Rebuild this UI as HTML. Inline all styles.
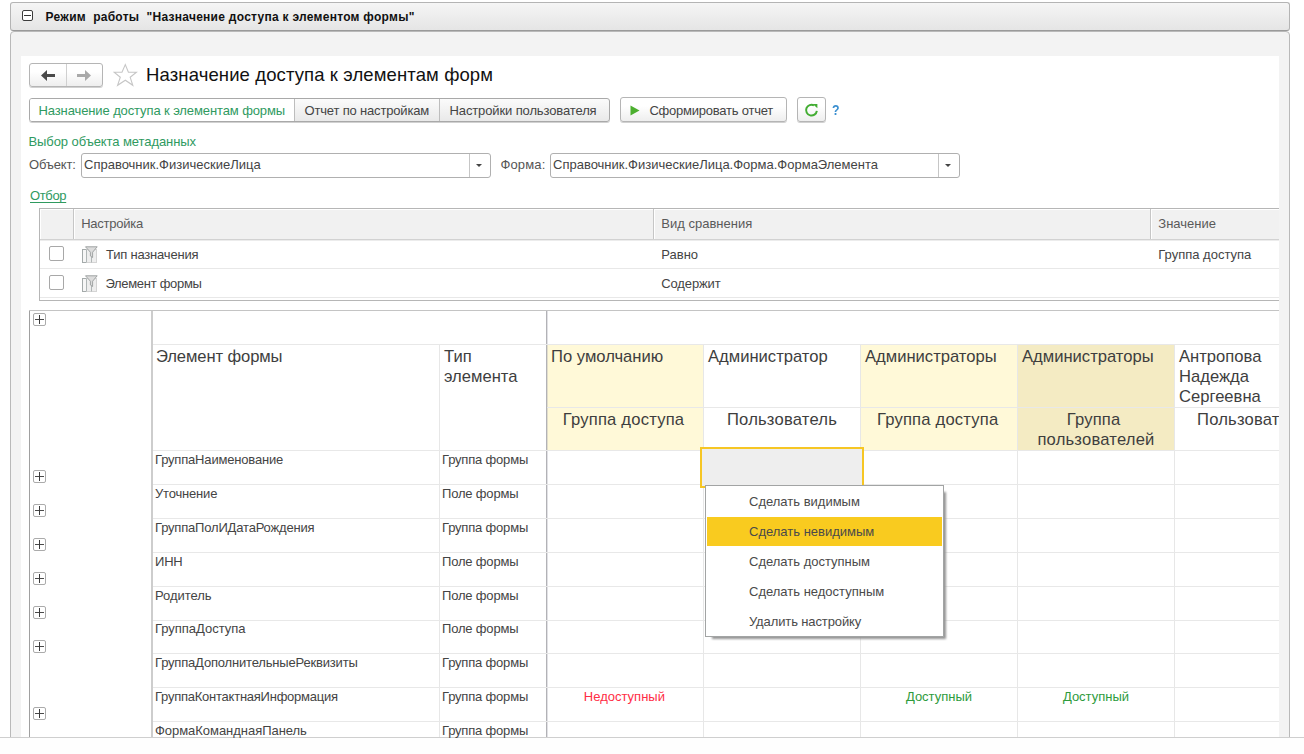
<!DOCTYPE html>
<html lang="ru">
<head>
<meta charset="utf-8">
<title>Назначение доступа к элементам форм</title>
<style>
*{box-sizing:border-box;margin:0;padding:0}
html,body{width:1304px;height:754px;overflow:hidden;background:#fff}
body{font-family:"Liberation Sans",sans-serif;font-size:12px;color:#333;position:relative}
.abs{position:absolute}
.t{position:absolute;white-space:pre;line-height:1}
/* outer frame */
#titlebar{left:10px;top:2px;width:1280px;height:29px;border:1px solid #b4b4b4;border-bottom-color:#9a9a9a;border-radius:3px;background:linear-gradient(#f5f5f5,#e5e5e5)}
#panel{left:10px;top:31px;width:1280px;height:720px;border:1px solid #b9b9b9;border-radius:4px 4px 0 0;background:#f3f3f3}
#white{left:21px;top:56px;width:1258px;height:690px;background:#fff}
#bottomline{left:0;top:737px;width:1304px;height:1px;background:#cfcfcf}
#bottomfill{left:0;top:738px;width:1304px;height:16px;background:#fefefe}
/* buttons */
.btn{position:absolute;border:1px solid #b5b5b5;border-radius:3px;background:linear-gradient(#ffffff 35%,#eeeeee);box-shadow:0 1px 0 rgba(0,0,0,.18)}
.inp{position:absolute;border:1px solid #b0b0b0;border-radius:3px;background:#fff}
.green{color:#2f9a5f}
.vline{position:absolute;width:1px;background:#e7e7e7}
.hline{position:absolute;height:1px;background:#e8e8e8}
.plus{position:absolute;width:13px;height:13px;border:1px solid #ababab;border-radius:2px;background:#fff}
.plus:before{content:"";position:absolute;left:1px;top:5px;width:9px;height:1px;background:#4a4a4a}
.plus:after{content:"";position:absolute;left:5px;top:1px;width:1px;height:9px;background:#3a3a3a}
.chk{position:absolute;width:15px;height:15px;border:1px solid #a8a8a8;border-radius:2px;background:#fff}
.r{font-size:13px;color:#444;letter-spacing:-.18px}
.h16{font-size:16.6px;color:#3e3e3e;line-height:20px}
.c{text-align:center}
</style>
</head>
<body>
<div id="titlebar" class="abs"></div>
<div id="panel" class="abs"></div>
<div id="white" class="abs"></div>
<div id="bottomfill" class="abs"></div>
<div id="bottomline" class="abs"></div>

<!-- title bar content -->
<div class="abs" style="left:22px;top:10px;width:11px;height:11px;border:1px solid #3c3c3c;border-radius:2px;background:#fff"></div>
<div class="abs" style="left:24px;top:15px;width:7px;height:1px;background:#333"></div>
<div class="t" id="tbtext" style="left:45.6px;top:11px;font-size:12px;font-weight:bold;color:#111;letter-spacing:.27px">Режим  работы  "Назначение доступа к элементом формы"</div>

<!-- nav buttons -->
<div class="btn" style="left:29px;top:63px;width:74px;height:24px"></div>
<div class="abs" style="left:66px;top:64px;width:1px;height:22px;background:#d0d0d0"></div>
<svg class="abs" style="left:40px;top:69px" width="16" height="13" viewBox="0 0 16 13"><path d="M1 6.5 L7 1 V5 H15 V8 H7 V12 Z" fill="#4a4a4a"/></svg>
<svg class="abs" style="left:76px;top:69px" width="16" height="13" viewBox="0 0 16 13"><path d="M15 6.5 L9 1 V5 H1 V8 H9 V12 Z" fill="#a9a9a9"/></svg>
<!-- star -->
<svg class="abs" style="left:113px;top:63px" width="26" height="25" viewBox="0 0 26 25"><path d="M12.3 1.6 L15.4 9.3 L23.4 9.3 L17.2 14.3 L19.8 22.3 L12.3 17.2 L4.6 22.3 L7.3 14.3 L1.1 9.3 L9.0 9.3 Z" fill="#fff" stroke="#c6c6c6" stroke-width="1.1" stroke-linejoin="miter"/></svg>
<div class="t" id="heading" style="left:146.1px;top:66px;font-size:18.5px;color:#111;letter-spacing:.11px">Назначение доступа к элементам форм</div>

<!-- tabs -->
<div class="btn" style="left:29px;top:98px;width:581px;height:24px;border-color:#a9a9a9;background:linear-gradient(#fbfbfb,#e9e9e9)"></div>
<div class="abs" style="left:30px;top:99px;width:264px;height:22px;background:#fff;border-radius:2px 0 0 2px"></div>
<div class="abs" style="left:294px;top:99px;width:1px;height:22px;background:#bdbdbd"></div>
<div class="abs" style="left:439px;top:99px;width:1px;height:22px;background:#bdbdbd"></div>
<div class="t green" id="tab1" style="top:104px;left:38.5px;font-size:13px;letter-spacing:-.11px">Назначение доступа к элементам формы</div>
<div class="t" id="tab2" style="top:104px;left:304.5px;font-size:13px;letter-spacing:-.17px;color:#444">Отчет по настройкам</div>
<div class="t" id="tab3" style="top:104px;left:449.5px;font-size:13px;letter-spacing:-.12px;color:#444">Настройки пользователя</div>

<!-- generate report -->
<div class="btn" style="left:620px;top:97px;width:167px;height:25px"></div>
<svg class="abs" style="left:630px;top:105px" width="10" height="11" viewBox="0 0 10 11"><path d="M0.5 0.5 L9.5 5.5 L0.5 10.5 Z" fill="#4caf2f"/></svg>
<div class="t" id="gen" style="top:104px;left:649.4px;font-size:13px;letter-spacing:-.22px;color:#444">Сформировать отчет</div>
<!-- refresh -->
<div class="btn" style="left:797px;top:97px;width:29px;height:25px"></div>
<svg class="abs" style="left:803px;top:102px" width="17" height="17" viewBox="0 0 17 17"><path d="M13.85 8.9 A5.4 5.4 0 1 1 11.0 3.35" fill="none" stroke="#43ad33" stroke-width="2"/><path d="M9.6 1.9 H14.4 V6.2 Z" fill="#43ad33"/></svg>
<div class="t" style="left:832.3px;top:103px;font-size:14px;font-weight:bold;color:#3a8fd0;transform:scaleX(.88);transform-origin:0 0">?</div>

<!-- metadata chooser -->
<div class="t green" id="vybor" style="left:28.5px;top:135px;font-size:13px;letter-spacing:-.08px">Выбор объекта метаданных</div>
<div class="t" id="lobj" style="left:29px;top:158px;font-size:13px;letter-spacing:-.17px;color:#555">Объект:</div>
<div class="inp" style="left:81px;top:153px;width:410px;height:25px"></div>
<div class="abs" style="left:469px;top:154px;width:1px;height:23px;background:#c6c6c6"></div>
<div class="abs" style="left:476px;top:164px;width:0;height:0;border-left:3px solid transparent;border-right:3px solid transparent;border-top:3px solid #444"></div>
<div class="t" id="vobj" style="left:84px;top:158px;font-size:13px;color:#444">Справочник.ФизическиеЛица</div>
<div class="t" id="lform" style="left:500.5px;top:158px;font-size:13px;letter-spacing:.13px;color:#555">Форма:</div>
<div class="inp" style="left:550px;top:153px;width:410px;height:25px"></div>
<div class="abs" style="left:938px;top:154px;width:1px;height:23px;background:#c6c6c6"></div>
<div class="abs" style="left:945px;top:164px;width:0;height:0;border-left:3px solid transparent;border-right:3px solid transparent;border-top:3px solid #444"></div>
<div class="t" id="vform" style="left:553px;top:158px;font-size:13px;color:#444">Справочник.ФизическиеЛица.Форма.ФормаЭлемента</div>

<div class="t green" id="otbor" style="left:30px;top:189px;font-size:13px;letter-spacing:-.35px;text-decoration:underline;text-decoration-skip-ink:none;text-underline-offset:1.5px;text-decoration-thickness:1.3px">Отбор</div>
<!-- filter table -->
<div class="abs" style="left:39px;top:208px;width:1240px;height:93px;border:1px solid #b6b6b6;border-right:0;background:#fff"></div>
<div class="abs" style="left:41px;top:210px;width:1238px;height:29px;background:#f1f1f1"></div>
<div class="abs" style="left:40px;top:239px;width:1239px;height:1px;background:#d2d2d2"></div>
<div class="abs" style="left:40px;top:240px;width:1239px;height:1px;background:#ececec"></div>
<div class="abs" style="left:40px;top:268px;width:1239px;height:1px;background:#e8e8e8"></div>
<div class="abs" style="left:40px;top:297px;width:1239px;height:1px;background:#e8e8e8"></div>
<div class="abs" style="left:73px;top:209px;width:2px;height:30px;background:linear-gradient(90deg,#c6c6c6 50%,#fff 50%)"></div>
<div class="abs" style="left:653px;top:209px;width:2px;height:30px;background:linear-gradient(90deg,#c6c6c6 50%,#fff 50%)"></div>
<div class="abs" style="left:1150px;top:209px;width:2px;height:30px;background:linear-gradient(90deg,#c6c6c6 50%,#fff 50%)"></div>
<div class="t" id="fh1" style="left:81.2px;top:217px;font-size:13px;color:#5a5a5a;letter-spacing:-.25px">Настройка</div>
<div class="t" id="fh2" style="left:661.3px;top:217px;font-size:13px;color:#5a5a5a">Вид сравнения</div>
<div class="t" id="fh3" style="left:1158.3px;top:217px;font-size:13px;color:#5a5a5a">Значение</div>
<div class="chk" style="left:49px;top:246px"></div>
<div class="chk" style="left:49px;top:275px"></div>
<svg class="abs ficon" style="left:81px;top:246px" width="17" height="17" viewBox="0 0 17 17"><rect x="1.5" y="3.5" width="4" height="13" fill="#f6f6f6" stroke="#a4aaaa"/><rect x="5.5" y="3.5" width="10" height="13" fill="#eeeeee" stroke="#d4d4d4"/><path d="M5.5 3.5V16.5M10.5 9V16.5" stroke="#b0b6b6" fill="none"/><path d="M4.5 0.8 H16.2 L11.6 6.2 V11.5 L9.4 10 V6.2 Z" fill="#dcdcdc" stroke="#a0a4a4" stroke-width="1"/></svg>
<svg class="abs ficon" style="left:81px;top:275px" width="17" height="17" viewBox="0 0 17 17"><rect x="1.5" y="3.5" width="4" height="13" fill="#f6f6f6" stroke="#a4aaaa"/><rect x="5.5" y="3.5" width="10" height="13" fill="#eeeeee" stroke="#d4d4d4"/><path d="M5.5 3.5V16.5M10.5 9V16.5" stroke="#b0b6b6" fill="none"/><path d="M4.5 0.8 H16.2 L11.6 6.2 V11.5 L9.4 10 V6.2 Z" fill="#dcdcdc" stroke="#a0a4a4" stroke-width="1"/></svg>
<div class="t" id="fr1a" style="left:106px;top:248px;font-size:13px;color:#444;letter-spacing:-.2px">Тип назначения</div>
<div class="t" id="fr2a" style="left:105.4px;top:277px;font-size:13px;color:#444;letter-spacing:-.3px">Элемент формы</div>
<div class="t" id="fr1b" style="left:661.3px;top:248px;font-size:13px;color:#444">Равно</div>
<div class="t" id="fr2b" style="left:661.3px;top:277px;font-size:13px;color:#444;letter-spacing:-.14px">Содержит</div>
<div class="t" id="fr1c" style="left:1158.3px;top:248px;font-size:13px;color:#444">Группа доступа</div>
<!-- grid -->
<div class="abs" style="left:547px;top:345px;width:156px;height:105px;background:#fff9d8"></div>
<div class="abs" style="left:861px;top:345px;width:156px;height:105px;background:#fff9d8"></div>
<div class="abs" style="left:1018px;top:345px;width:156px;height:105px;background:#f4ebc3"></div>
<div class="abs" style="left:29px;top:310px;width:1250px;height:1px;background:#c4c4c4"></div>
<div class="abs" style="left:29px;top:311px;width:1px;height:426px;background:#a0a0a0"></div>
<div class="abs" style="left:151px;top:311px;width:2px;height:426px;background:#cdcdcd"></div>
<div class="abs" style="left:546px;top:311px;width:1px;height:426px;background:#b2b2b6"></div>
<div class="abs" style="left:547px;top:311px;width:1px;height:426px;background:rgba(170,170,180,.35)"></div>
<div class="vline" style="left:439px;top:345px;height:392px"></div>
<div class="vline" style="left:703px;top:345px;height:392px"></div>
<div class="vline" style="left:860px;top:345px;height:392px"></div>
<div class="vline" style="left:1017px;top:345px;height:392px"></div>
<div class="vline" style="left:1174px;top:345px;height:392px"></div>
<div class="hline" style="left:153px;top:344px;width:1126px"></div>
<div class="hline" style="left:547px;top:407px;width:732px"></div>
<div class="hline" style="left:153px;top:450px;width:1126px"></div>
<div class="hline" style="left:153px;top:484px;width:1126px"></div>
<div class="hline" style="left:153px;top:518px;width:1126px"></div>
<div class="hline" style="left:153px;top:552px;width:1126px"></div>
<div class="hline" style="left:153px;top:586px;width:1126px"></div>
<div class="hline" style="left:153px;top:620px;width:1126px"></div>
<div class="hline" style="left:153px;top:653px;width:1126px"></div>
<div class="hline" style="left:153px;top:687px;width:1126px"></div>
<div class="hline" style="left:153px;top:721px;width:1126px"></div>
<div class="plus" style="left:33px;top:313px"></div>
<div class="plus" style="left:33px;top:470px"></div>
<div class="plus" style="left:33px;top:504px"></div>
<div class="plus" style="left:33px;top:538px"></div>
<div class="plus" style="left:33px;top:572px"></div>
<div class="plus" style="left:33px;top:606px"></div>
<div class="plus" style="left:33px;top:640px"></div>
<div class="plus" style="left:33px;top:707px"></div>
<div class="t h16" id="gh1" style="letter-spacing:-.1px;left:156px;top:347px">Элемент формы</div>
<div class="t h16" id="gh2" style="left:444px;top:347px">Тип
элемента</div>
<div class="t h16" id="gh3" style="left:551px;top:347px">По умолчанию</div>
<div class="t h16" id="gh4" style="left:708px;top:347px">Администратор</div>
<div class="t h16" id="gh5" style="left:865px;top:347px">Администраторы</div>
<div class="t h16" id="gh6" style="left:1022px;top:347px">Администраторы</div>
<div class="t h16" id="gh7" style="left:1179px;top:347px">Антропова
Надежда
Сергеевна</div>
<div class="t h16 c" id="gs3" style="letter-spacing:.2px;left:545.5px;top:410px;width:156px">Группа доступа</div>
<div class="t h16 c" id="gs4" style="letter-spacing:.2px;left:704px;top:410px;width:156px">Пользователь</div>
<div class="t h16 c" id="gs5" style="letter-spacing:.2px;left:859.7px;top:410px;width:156px">Группа доступа</div>
<div class="t h16 c" id="gs6" style="letter-spacing:.2px;left:1018px;top:410px;width:156px">Группа 
пользователей</div>
<div class="abs" style="left:1175px;top:410px;width:104px;height:40px;overflow:hidden"><div class="t h16" id="gs7" style="letter-spacing:.2px;left:22px;top:0">Пользователь</div></div>
<div class="t r" id="ra0" style="left:155px;top:453px">ГруппаНаименование</div>
<div class="t r" id="rb0" style="left:442px;top:453px">Группа формы</div>
<div class="t r" id="ra1" style="left:155px;top:487px">Уточнение</div>
<div class="t r" id="rb1" style="left:442px;top:487px">Поле формы</div>
<div class="t r" id="ra2" style="left:155px;top:521px">ГруппаПолИДатаРождения</div>
<div class="t r" id="rb2" style="left:442px;top:521px">Группа формы</div>
<div class="t r" id="ra3" style="left:155px;top:555px">ИНН</div>
<div class="t r" id="rb3" style="left:442px;top:555px">Поле формы</div>
<div class="t r" id="ra4" style="letter-spacing:-.04px;left:155px;top:589px">Родитель</div>
<div class="t r" id="rb4" style="left:442px;top:589px">Поле формы</div>
<div class="t r" id="ra5" style="letter-spacing:-.02px;left:155px;top:622px">ГруппаДоступа</div>
<div class="t r" id="rb5" style="left:442px;top:622px">Поле формы</div>
<div class="t r" id="ra6" style="left:155px;top:656px">ГруппаДополнительныеРеквизиты</div>
<div class="t r" id="rb6" style="left:442px;top:656px">Группа формы</div>
<div class="t r" id="ra7" style="letter-spacing:-.24px;left:155px;top:690px">ГруппаКонтактнаяИнформация</div>
<div class="t r" id="rb7" style="left:442px;top:690px">Группа формы</div>
<div class="t r" id="ra8" style="letter-spacing:-.04px;left:155px;top:724px">ФормаКоманднаяПанель</div>
<div class="t r" id="rb8" style="left:442px;top:724px">Группа формы</div>
<div class="t r c" id="st1" style="letter-spacing:0;left:546.4px;top:690px;width:156px;color:#ff2d45">Недоступный</div>
<div class="t r c" id="st2" style="letter-spacing:0;left:861px;top:690px;width:156px;color:#2e9b3c">Доступный</div>
<div class="t r c" id="st3" style="letter-spacing:0;left:1018px;top:690px;width:156px;color:#2e9b3c">Доступный</div>
<div class="abs" style="left:700px;top:447px;width:164px;height:41px;border:2px solid #f6c624;background:#eeeeee"></div>
<!-- context menu -->
<div class="abs" style="left:711.5px;top:491.5px;width:234.6px;height:147.8px;background:#949494;filter:blur(.8px)"></div>
<div class="abs" style="left:705px;top:485px;width:239px;height:152px;border:1px solid #a2a4a4;background:#fff"></div>
<div class="abs" style="left:707px;top:517px;width:235px;height:29px;background:#f9cb1f"></div>
<div class="t" id="mi0" style="left:749px;top:495px;font-size:13px;color:#4a4a4a">Сделать видимым</div>
<div class="t" id="mi1" style="left:749px;top:525px;font-size:13px;color:#4a4a4a">Сделать невидимым</div>
<div class="t" id="mi2" style="left:749px;top:555px;font-size:13px;color:#4a4a4a">Сделать доступным</div>
<div class="t" id="mi3" style="left:749px;top:585px;font-size:13px;color:#4a4a4a">Сделать недоступным</div>
<div class="t" id="mi4" style="left:749px;top:615px;font-size:13px;color:#4a4a4a;letter-spacing:-.12px">Удалить настройку</div>
</body>
</html>
